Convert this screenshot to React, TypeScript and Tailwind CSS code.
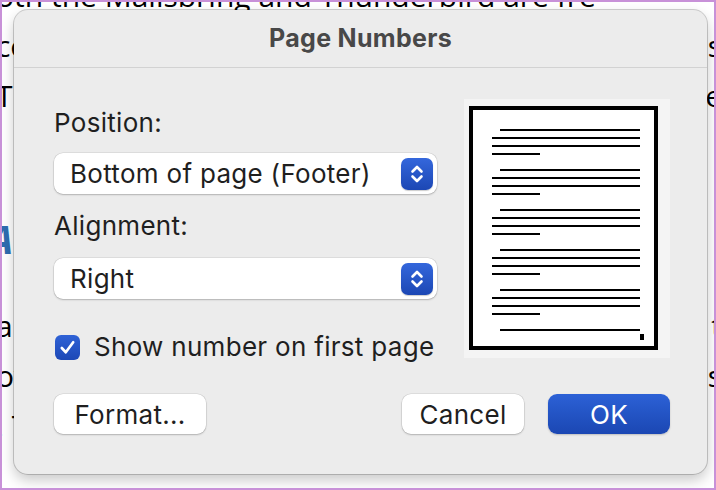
import React from "react";

const bgLines: { top: number; left: string; right: string }[] = [
  { top: -26, left: "oth the Mailsbring and Thunderbird are fre", right: "" },
  { top: 24, left: "come with a unified inbox and", right: "more features" },
  { top: 74, left: "The only difference is in the", right: "interface" },
  { top: 304, left: "app is better for your use case, but it", right: "t" },
  { top: 354, left: "over the years the app has", right: "features" },
  { top: 404, left: ". That said", right: "" },
];

function Stepper() {
  return (
    <div className="flex h-8 w-8 items-center justify-center rounded-[7px] bg-gradient-to-b from-[#3467dc] to-[#1c47b4] shadow-[0_1px_1px_rgba(0,0,0,0.2)]">
      <svg width="32" height="32" viewBox="0 0 32 32" fill="none">
        <path d="M11.5 13.5 L16 9 L20.5 13.5" stroke="white" strokeWidth="2.6" strokeLinecap="round" strokeLinejoin="round" />
        <path d="M11.5 18.5 L16 23 L20.5 18.5" stroke="white" strokeWidth="2.6" strokeLinecap="round" strokeLinejoin="round" />
      </svg>
    </div>
  );
}

function Select({ value }: { value: string }) {
  return (
    <div className="flex h-[41px] w-[383px] items-center justify-between rounded-[9px] bg-white pl-4 pr-1 shadow-[0_0_0_0.5px_rgba(0,0,0,0.12),0_1px_2px_rgba(0,0,0,0.2)]">
      <span className="text-[26px] leading-[30px] tracking-[0.3px] text-[#1f1f1f]">{value}</span>
      <Stepper />
    </div>
  );
}

function PagePreview() {
  const groups = [0, 1, 2, 3, 4];
  return (
    <div className="flex h-[259px] w-[206px] bg-[#f4f4f4] pl-[5px] pt-[7px]">
      <div className="flex h-[244px] w-[189px] flex-col border-[4px] border-black bg-white pl-[19px] pt-[19px]">
        {groups.map((g) => (
          <div key={g} className="mb-[14px] flex flex-col gap-[6px]">
            <div className="ml-[8px] h-[2px] w-[140px] bg-black" />
            <div className="h-[2px] w-[148px] bg-black" />
            <div className="h-[2px] w-[148px] bg-black" />
            <div className="h-[2px] w-[48px] bg-black" />
          </div>
        ))}
        <div className="ml-[8px] h-[2px] w-[140px] bg-black" />
        <div className="ml-[148px] mt-[3px] h-[6px] w-[4px] bg-black" />
      </div>
    </div>
  );
}

export default function App() {
  return (
    <div
      className="relative h-[490px] w-[716px] overflow-hidden border-2 border-[#c891d8] bg-white"
      style={{ fontFamily: "Inter, 'Liberation Sans', sans-serif" }}
    >
      {/* document behind the dialog */}
      {bgLines.map((l, i) => (
        <div
          key={i}
          className="absolute left-[-6px] right-[-8px] flex justify-between whitespace-nowrap text-[30px] leading-[40px] text-black"
          style={{ top: l.top, fontFamily: "'Open Sans', sans-serif" }}
        >
          <span>{l.left}</span>
          <span>{l.right}</span>
        </div>
      ))}
      <div
        className="absolute left-[-14px] top-[212px] text-[40px] font-bold italic leading-[50px] text-[#2e6db0]"
        style={{ fontFamily: "'Open Sans', sans-serif" }}
      >
        A
      </div>

      {/* dialog */}
      <div className="absolute left-[12px] top-[8px] flex h-[464px] w-[693px] flex-col rounded-[14px] bg-[#ececec] shadow-[0_0_0_1px_rgba(0,0,0,0.18),0_6px_14px_rgba(0,0,0,0.22)]">
        <div className="flex h-[58px] items-center justify-center border-b border-[#d2d2d2]">
          <span className="text-[25px] font-bold tracking-[0.3px] text-[#484848]">Page Numbers</span>
        </div>

        <div className="flex pl-[40px] pr-[37px]">
          <div className="flex w-[383px] flex-col pt-[40px]">
            <div className="text-[26px] leading-[30px] tracking-[0.3px] text-[#1f1f1f]">Position:</div>
            <div className="mt-[15px]">
              <Select value="Bottom of page (Footer)" />
            </div>
            <div className="mt-[17px] text-[26px] leading-[30px] tracking-[0.3px] text-[#1f1f1f]">Alignment:</div>
            <div className="mt-[17px]">
              <Select value="Right" />
            </div>
            <div className="mt-[33px] flex items-center gap-[14px]">
              <div className="ml-[1px] flex h-[25px] w-[25px] items-center justify-center rounded-[6px] bg-gradient-to-b from-[#2f62d6] to-[#1d48b6]">
                <svg width="19" height="19" viewBox="0 0 20 20" fill="none">
                  <path d="M4 10.5 L8.2 15 L16 4.5" stroke="white" strokeWidth="2.8" strokeLinecap="round" strokeLinejoin="round" />
                </svg>
              </div>
              <span className="text-[26px] leading-[30px] tracking-[0.3px] text-[#1f1f1f]">Show number on first page</span>
            </div>
          </div>
          <div className="ml-auto pt-[31px]">
            <PagePreview />
          </div>
        </div>

        <div className="mt-[32px] flex items-center pl-[40px] pr-[37px]">
          <button className="h-[40px] w-[152px] rounded-[9px] bg-white text-[26px] tracking-[0.3px] text-[#1f1f1f] shadow-[0_0_0_0.5px_rgba(0,0,0,0.12),0_1px_2px_rgba(0,0,0,0.2)]">
            Format...
          </button>
          <button className="ml-auto h-[40px] w-[122px] rounded-[9px] bg-white text-[26px] tracking-[0.3px] text-[#1f1f1f] shadow-[0_0_0_0.5px_rgba(0,0,0,0.12),0_1px_2px_rgba(0,0,0,0.2)]">
            Cancel
          </button>
          <button className="ml-[24px] h-[40px] w-[122px] rounded-[9px] bg-gradient-to-b from-[#2c61d6] to-[#1b47b3] text-[26px] tracking-[0.3px] text-white shadow-[0_1px_2px_rgba(0,0,0,0.2)]">
            OK
          </button>
        </div>
      </div>
    </div>
  );
}
